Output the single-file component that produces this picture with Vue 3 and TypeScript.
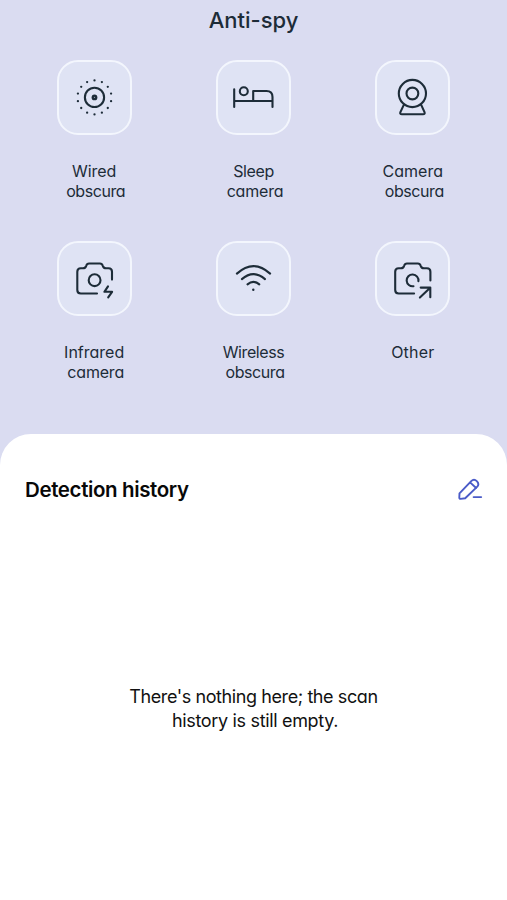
<script setup lang="ts">
interface Line {
  text: string
  spacing: number
}
interface Detector {
  icon: 'wired' | 'sleep' | 'webcam' | 'infrared' | 'wifi' | 'other'
  lines: Line[]
}

const detectors: Detector[] = [
  { icon: 'wired', lines: [{ text: 'Wired', spacing: 0 }, { text: 'obscura', spacing: -0.42 }] },
  { icon: 'sleep', lines: [{ text: 'Sleep', spacing: -0.4 }, { text: 'camera', spacing: -0.2 }] },
  { icon: 'webcam', lines: [{ text: 'Camera', spacing: 0 }, { text: 'obscura', spacing: -0.42 }] },
  { icon: 'infrared', lines: [{ text: 'Infrared', spacing: 0 }, { text: 'camera', spacing: -0.2 }] },
  { icon: 'wifi', lines: [{ text: 'Wireless', spacing: -0.42 }, { text: 'obscura', spacing: -0.42 }] },
  { icon: 'other', lines: [{ text: 'Other', spacing: 0.2 }] },
]

const rays = Array.from({ length: 14 }, (_, i) => {
  const angle = (i * 2 * Math.PI) / 14
  return { x: 37.5 + 17 * Math.sin(angle), y: 37.4 - 17 * Math.cos(angle) }
})
</script>

<template>
  <main class="screen">
    <h1 class="title">Anti-spy</h1>

    <section class="grid">
      <div v-for="(item, index) in detectors" :key="index" class="item">
        <div class="tile">
          <svg class="icon" viewBox="0 0 75 75">
            <g v-if="item.icon === 'wired'">
              <circle cx="37.5" cy="37.4" r="9.6" />
              <circle class="dot" cx="37.5" cy="37.4" r="2.9" />
              <circle class="pupil" cx="37.5" cy="37.4" r="0.6" />
              <circle v-for="(ray, i) in rays" :key="i" class="dot" :cx="ray.x" :cy="ray.y" r="1.15" />
            </g>
            <g v-else-if="item.icon === 'sleep'">
              <path d="M18.2 29.2V47M18.2 41H56.5M56.5 47V37Q56.5 31 50.5 31H37.2V41" />
              <circle cx="27.8" cy="31.3" r="4" />
            </g>
            <g v-else-if="item.icon === 'webcam'">
              <circle cx="37.4" cy="33.5" r="13.6" />
              <circle cx="37.4" cy="33.5" r="5.9" />
              <path d="M28.8 44.9L25.4 52.1Q24.6 54.3 26.9 54.3H48Q50.3 54.3 49.5 52.1L46.2 44.9" />
            </g>
            <g v-else-if="item.icon === 'infrared'">
              <path d="M40 52.5H23.8Q20.3 52.5 20.3 49V30.8Q20.3 27.3 23.8 27.3H26Q28.3 27.3 29.2 24.8Q29.9 22.5 32 22.5H43Q45.1 22.5 45.8 24.8Q46.7 27.3 49 27.3H51.5Q55 27.3 55 30.8V38.6" />
              <circle cx="37.6" cy="39.2" r="5.9" />
              <path d="M51 45.4L47.4 50.8H55.1L51.2 56.3" />
            </g>
            <g v-else-if="item.icon === 'wifi'">
              <path d="M20.9 32.6Q37.5 17.6 54.1 32.6M25.9 38.1Q37.4 28.1 49 38.1M31.5 43.4Q37.4 38.4 43.3 43.4" />
              <circle class="dot" cx="37.3" cy="48.7" r="1.2" />
            </g>
            <g v-else>
              <path d="M39.1 52.5H23.7Q20.2 52.5 20.2 49V30.8Q20.2 27.3 23.7 27.3H25.9Q28.2 27.3 29.1 24.8Q29.8 22.5 31.9 22.5H42.9Q45 22.5 45.7 24.8Q46.6 27.3 48.9 27.3H51.9Q55.4 27.3 55.4 30.8V39.5" />
              <path d="M38.5 45.2A5.9 5.9 0 1 1 43.4 40.2" />
              <path d="M45.7 46.6H55.3V56.2M55.2 46.7L44.9 56.6" />
            </g>
          </svg>
        </div>
        <p class="label">
          <span
            v-for="line in item.lines"
            :key="line.text"
            class="line"
            :style="{ letterSpacing: line.spacing + 'px' }"
          >{{ line.text }}</span>
        </p>
      </div>
    </section>

    <section class="sheet">
      <header class="sheet-head">
        <h2 class="heading">Detection history</h2>
        <button class="edit" type="button" aria-label="Edit">
          <svg viewBox="0 0 25 24">
            <path d="M1.5 15.3L13.2 3.1Q16 .6 18.8 3.1Q21.6 5.9 19.3 8.6L7.2 20.2L2.6 20.9Q1.3 20.9 1.3 19.6ZM12.1 4.4L18.1 10M15.6 19.1H23.2" />
          </svg>
        </button>
      </header>
      <p class="empty">
        <span class="empty-line first">There's nothing here; the scan</span>
        <span class="empty-line second">history is still empty.</span>
      </p>
    </section>
  </main>
</template>

<style>
body {
  margin: 0;
}
</style>

<style scoped>
.screen {
  display: flex;
  flex-direction: column;
  height: 900px;
  overflow: hidden;
  background: #dadcf1;
  color: #1d2c38;
  font-family: Inter, "Open Sans", sans-serif;
  font-feature-settings: "cv11" 1;
}
.title {
  margin: 0;
  padding-top: 5px;
  height: 54.5px;
  box-sizing: border-box;
  text-align: center;
  font-size: 22px;
  font-weight: 500;
  line-height: 30px;
}
.grid {
  display: grid;
  grid-template-columns: repeat(3, 1fr);
  grid-auto-rows: 181px;
  height: 374px;
  padding: 5px 14.5px 0;
  box-sizing: border-box;
}
.item {
  display: flex;
  flex-direction: column;
  align-items: center;
}
.tile {
  box-sizing: border-box;
  width: 75px;
  height: 75px;
  border: 2px solid #f3f6fd;
  border-radius: 21px;
  background: #dfe3f4;
}
.icon {
  display: block;
  width: 75px;
  height: 75px;
  margin: -2px;
  fill: none;
  stroke: #1d2c38;
  stroke-width: 2.1;
  stroke-linecap: round;
  stroke-linejoin: round;
}
.dot {
  fill: #1d2c38;
  stroke: none;
}
.pupil {
  fill: #8d98a8;
  stroke: none;
}
.label {
  margin: 26px 0 0;
  font-size: 16px;
  line-height: 20.5px;
  text-align: center;
}
.line {
  display: block;
}
.line + .line {
  padding-left: 3px;
}
.sheet {
  flex: 1;
  margin-top: 5px;
  border-radius: 31px 31px 0 0;
  background: #fff;
  color: #111;
}
.sheet-head {
  display: flex;
  justify-content: space-between;
  align-items: center;
  padding: 41px 24px 0 25px;
}
.heading {
  margin: 0;
  font-size: 20.5px;
  font-weight: 600;
  line-height: 30px;
  letter-spacing: -0.38px;
  color: #080808;
}
.edit {
  width: 25px;
  height: 24px;
  padding: 0;
  border: 0;
  background: none;
}
.edit svg {
  display: block;
  width: 25px;
  height: 24px;
  fill: none;
  stroke: #4a5bc8;
  stroke-width: 1.9;
  stroke-linecap: round;
  stroke-linejoin: round;
}
.empty {
  margin: 180px 0 0;
  text-align: center;
  font-size: 18px;
  line-height: 24px;
}
.empty-line {
  display: block;
}
.first {
  letter-spacing: -0.41px;
}
.second {
  padding-left: 3px;
  letter-spacing: -0.33px;
}
</style>
